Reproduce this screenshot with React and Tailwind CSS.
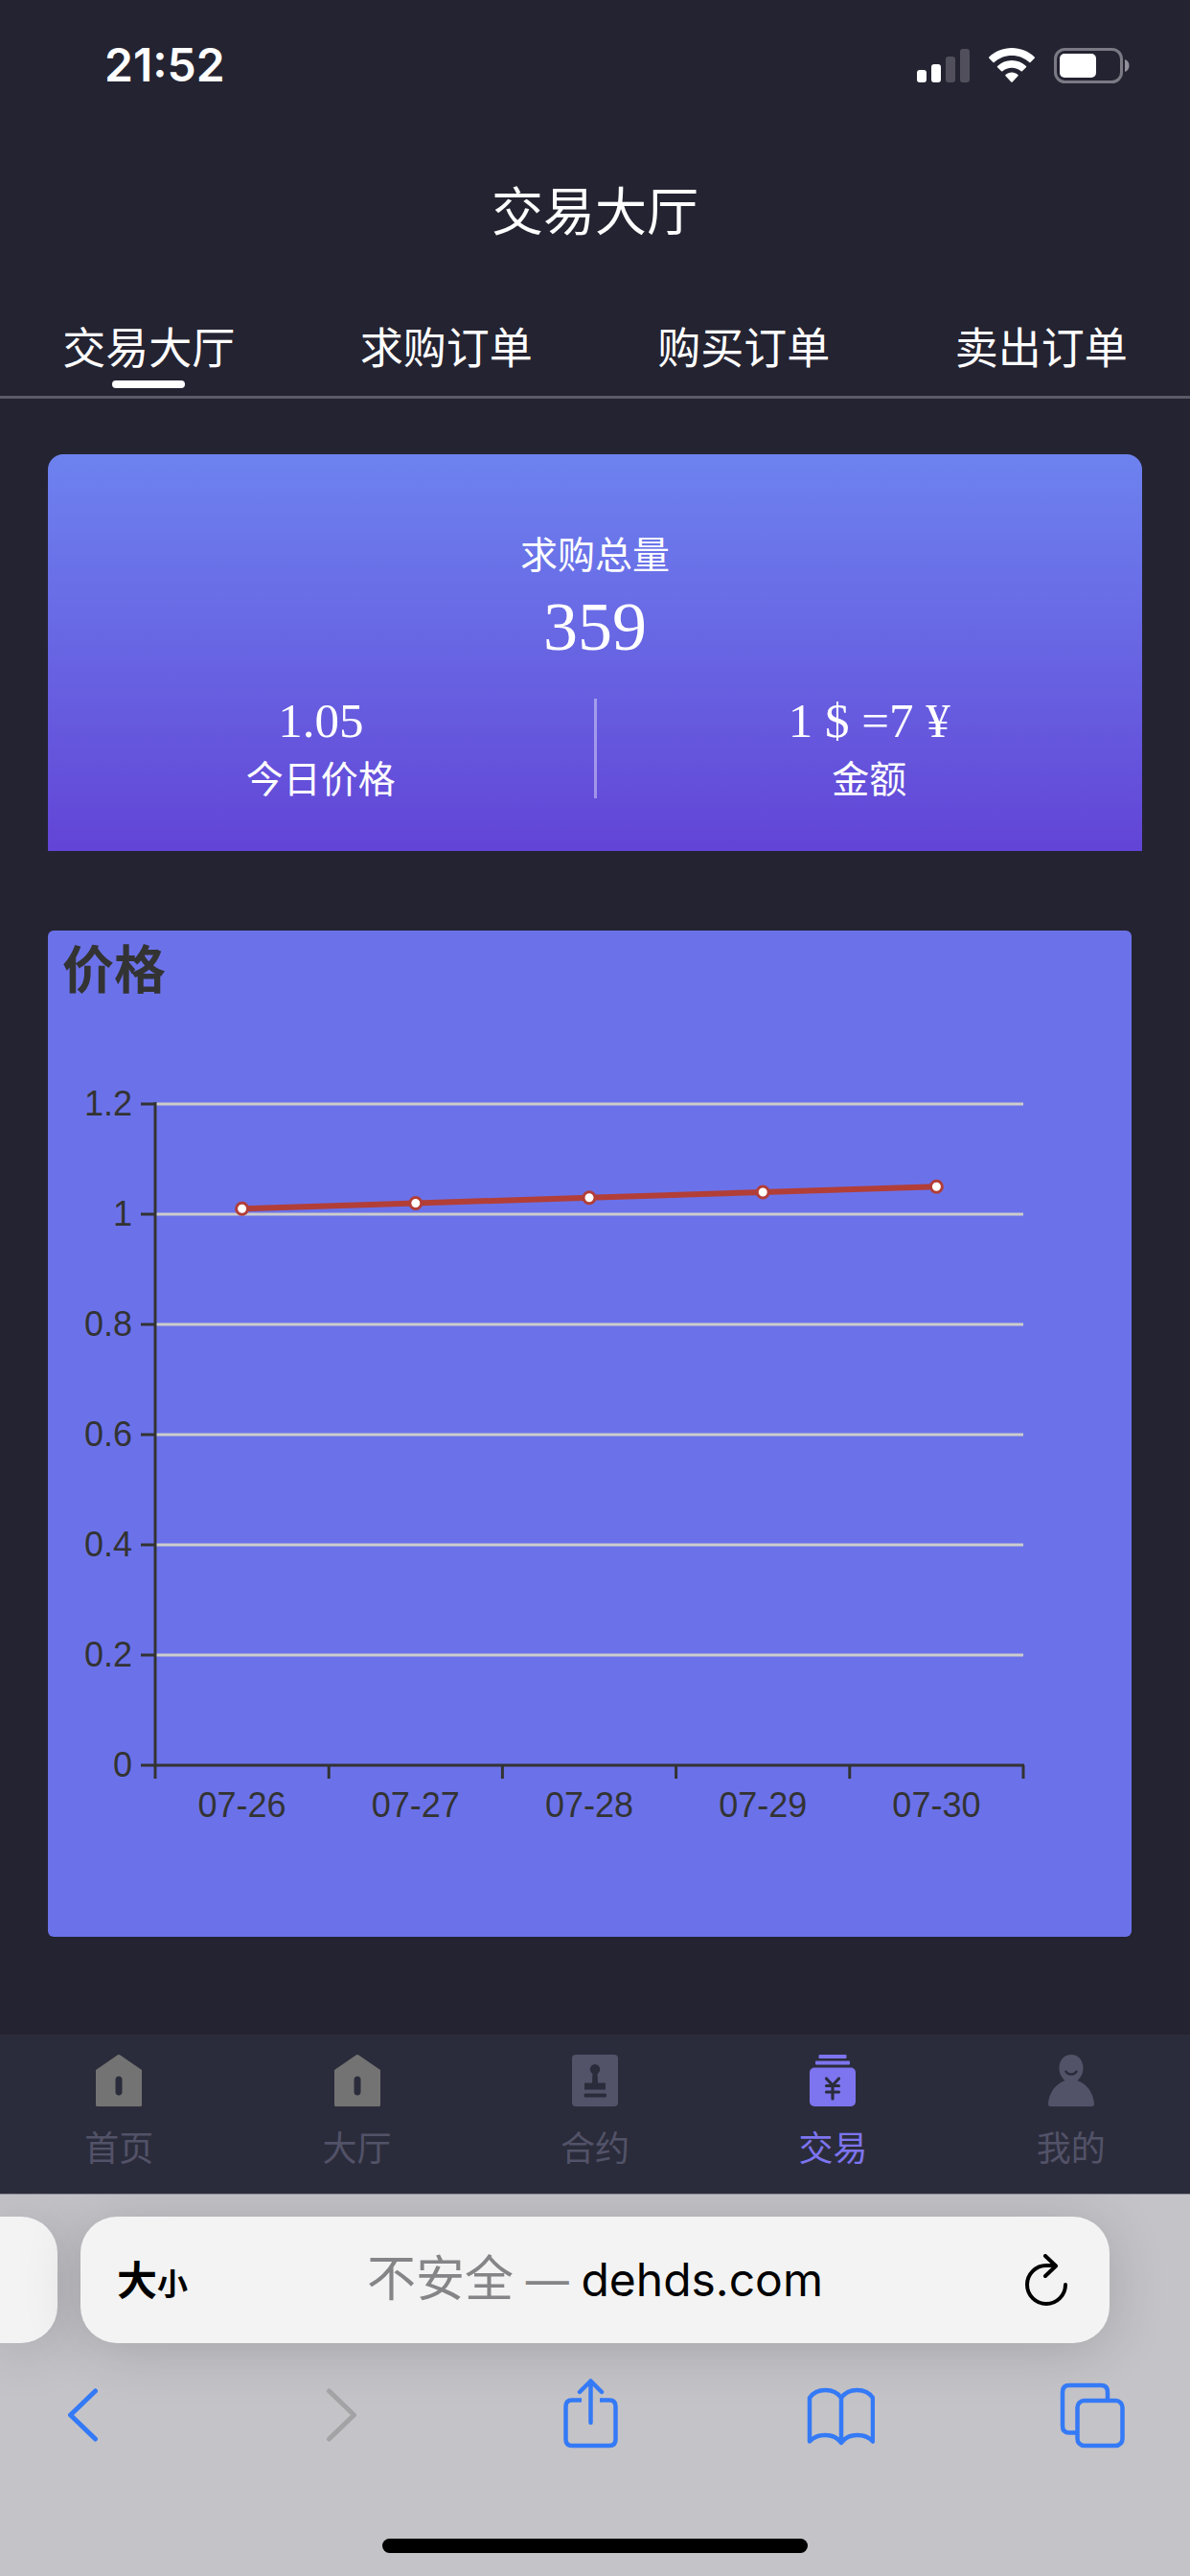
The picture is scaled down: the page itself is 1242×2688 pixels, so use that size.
import React, { useState } from "react";

const tabs = ["交易大厅", "求购订单", "购买订单", "卖出订单"];

const prices = [
  { date: "07-26", price: 1.01 },
  { date: "07-27", price: 1.02 },
  { date: "07-28", price: 1.03 },
  { date: "07-29", price: 1.04 },
  { date: "07-30", price: 1.05 },
];

const yTicks = [1.2, 1, 0.8, 0.6, 0.4, 0.2, 0];

const StatusBar = () => (
  <div className="flex h-[136px] items-center justify-between pl-[109px] pr-[63px]">
    <span className="font-['Inter'] text-[48px] font-semibold leading-[56px]">
      21:52
    </span>
    <div className="flex items-center gap-5">
      <svg width="55" height="37" viewBox="0 0 55 37" aria-hidden="true">
        <rect x="0" y="23" width="10" height="13" rx="3" fill="#fff" />
        <rect x="15" y="17" width="10" height="19" rx="3" fill="#fff" />
        <rect x="30" y="9" width="10" height="27" rx="3" fill="#504f5b" />
        <rect x="45" y="1" width="10" height="35" rx="3" fill="#504f5b" />
      </svg>
      <svg width="48" height="37" viewBox="0 0 48 37" fill="#fff" aria-hidden="true">
        <path d="M24 0C33 0 41.500 3.500 47.700 9.500C48.100 9.900 48.100 10.400 47.700 10.800L43.600 15C43.200 15.400 42.700 15.400 42.300 15C37.400 10.500 31 7.900 24 7.900C17 7.900 10.600 10.500 5.700 15C5.300 15.400 4.800 15.400 4.400 15L.3 10.800C-.1 10.400-.1 9.900.3 9.500C6.500 3.500 15 0 24 0Z" />
        <path d="M24 13C29.700 13 35 15.200 39 18.900C39.400 19.300 39.400 19.800 39 20.200L34.900 24.300C34.500 24.700 34 24.700 33.600 24.300C31 22 27.700 20.700 24 20.700C20.300 20.700 17 22 14.400 24.300C14 24.700 13.500 24.700 13.100 24.300L9 20.200C8.600 19.800 8.600 19.300 9 18.900C13 15.200 18.300 13 24 13Z" />
        <path d="M24 25.500C26.500 25.500 28.700 26.400 30.500 28C30.900 28.400 30.900 28.900 30.500 29.300L24.700 35.400C24.300 35.800 23.700 35.800 23.300 35.400L17.500 29.300C17.100 28.900 17.100 28.400 17.500 28C19.300 26.400 21.500 25.500 24 25.500Z" />
      </svg>
      <svg width="79" height="37" viewBox="0 0 79 37" aria-hidden="true">
        <rect x="1.500" y="1.500" width="69" height="34" rx="10" fill="none" stroke="#7b7a84" strokeWidth="3" />
        <rect x="6" y="6" width="38" height="25" rx="5" fill="#fff" />
        <path d="M74 12C77 13 78.500 15.500 78.500 18.500C78.500 21.500 77 24 74 25Z" fill="#918f99" />
      </svg>
    </div>
  </div>
);

const SummaryCard = () => (
  <section className="mx-[50px] mt-[58px] rounded-t-2xl bg-linear-to-b from-[#6d82ef] to-[#6244d6] pb-[52px] pt-[76px] text-center">
    <p className="text-[39px] leading-[52px]">求购总量</p>
    <p className="mt-1.5 font-['Liberation_Serif'] text-[72px] leading-[92px]">359</p>
    <div className="mt-[26px] flex items-center">
      <div className="flex-1">
        <p className="font-['Liberation_Serif'] text-[51px] leading-[52px]">1.05</p>
        <p className="mt-1.5 text-[39px] leading-[52px]">今日价格</p>
      </div>
      <div className="h-[104px] w-[3px] bg-white/40" />
      <div className="flex-1">
        <p className="font-['Liberation_Serif'] text-[51px] leading-[52px]">1 $ =7 ¥</p>
        <p className="mt-1.5 text-[39px] leading-[52px]">金额</p>
      </div>
    </div>
  </section>
);

const PriceChart = () => {
  // plot area inside the 1131 x 966 drawing
  const left = 112;
  const right = 1018;
  const top = 97;
  const bottom = 787;
  const step = (right - left) / prices.length;

  const toX = (i) => left + step * (i + 0.5);
  const toY = (value) => bottom - (value / 1.2) * (bottom - top);
  const line = prices.map((p, i) => `${toX(i)},${toY(p.price)}`).join(" ");

  return (
    <section className="ml-[50px] mr-[61px] mt-[83px] rounded-md bg-[#6b72e9] text-[#333]">
      <h2 className="px-[15px] pt-2 text-[54px] font-bold leading-[60px]">价格</h2>
      <svg
        viewBox="0 0 1131 966"
        className="mt-4 block w-full font-['Liberation_Sans'] text-[36px]"
        role="img"
        aria-label="价格"
      >
        {yTicks.map((tick) => (
          <g key={tick}>
            {tick > 0 && (
              <line x1={left} x2={right} y1={toY(tick)} y2={toY(tick)} stroke="#ccc" strokeWidth="3" />
            )}
            <line x1={left - 15} x2={left} y1={toY(tick)} y2={toY(tick)} stroke="#333" strokeWidth="3" />
            <text x={left - 24} y={toY(tick) + 12} textAnchor="end" fill="#333">
              {tick}
            </text>
          </g>
        ))}
        <line x1={left} x2={left} y1={top - 2} y2={bottom + 2} stroke="#333" strokeWidth="3" />
        <line x1={left} x2={right + 1} y1={bottom} y2={bottom} stroke="#333" strokeWidth="3" />
        {[...prices, null].map((_, i) => (
          <line
            key={i}
            x1={left + step * i}
            x2={left + step * i}
            y1={bottom}
            y2={bottom + 14}
            stroke="#333"
            strokeWidth="3"
          />
        ))}
        {prices.map((p, i) => (
          <text key={p.date} x={toX(i)} y={bottom + 54} textAnchor="middle" fill="#333">
            {p.date}
          </text>
        ))}
        <polyline points={line} fill="none" stroke="#b23e38" strokeWidth="6" />
        {prices.map((p, i) => (
          <circle
            key={p.date}
            cx={toX(i)}
            cy={toY(p.price)}
            r="6"
            fill="#fff"
            stroke="#b23e38"
            strokeWidth="3"
          />
        ))}
      </svg>
    </section>
  );
};

const HomeIcon = () => (
  <svg width="48" height="54" viewBox="0 0 48 54" aria-hidden="true">
    <path
      fill="#737373"
      fillRule="evenodd"
      d="M22.500.5C23.400-.2 24.600-.2 25.500.5L48 16V52.500Q48 54 46.500 54H1.500Q0 54 0 52.500V16ZM24 22.500C22 22.500 20.500 24 20.500 26V39C20.500 41 22 42.500 24 42.500C26 42.500 27.500 41 27.500 39V26C27.500 24 26 22.500 24 22.500Z"
    />
  </svg>
);

const ContractIcon = () => (
  <svg width="48" height="54" viewBox="0 0 48 54" aria-hidden="true">
    <rect width="48" height="54" rx="4" fill="#525368" />
    <g fill="#2b2c3b">
      <circle cx="24" cy="15.300" r="5.200" />
      <path d="M21.500 18H26.500L27 29.500H35V36.500H13V29.500H21Z" />
      <rect x="12.500" y="40.500" width="23.500" height="4" rx="1.500" />
    </g>
  </svg>
);

const TradeIcon = () => (
  <svg width="48" height="54" viewBox="0 0 48 54" fill="#7d74ef" aria-hidden="true">
    <rect x="9.500" y="0" width="29" height="4" rx="1" />
    <rect x="6" y="6.500" width="36" height="4" rx="1" />
    <rect x="0" y="13.500" width="48" height="40.500" rx="5" />
    <path
      d="M17.500 25L24 32L30.500 25M24 32V46M17.500 32.500H30.500M17.500 39H30.500"
      fill="none"
      stroke="#2b2c3b"
      strokeWidth="3.200"
      strokeLinecap="round"
    />
  </svg>
);

const MineIcon = () => (
  <svg width="48" height="54" viewBox="0 0 48 54" fill="#525368" aria-hidden="true">
    <path d="M24 0C31.500 0 36.500 6 36.500 14C36.500 19.500 34 24 30.500 27C40 30 47 39.500 48 51Q48 54 46 54H2Q0 54 0 51C1 39.500 8 30 17.500 27C14 24 11.500 19.500 11.500 14C11.500 6 16.500 0 24 0Z" />
    <path d="M18.500 17.500C20.500 21.500 27.500 21.500 29.500 17.500" fill="none" stroke="#2b2c3b" strokeWidth="2.500" strokeLinecap="round" />
  </svg>
);

const navItems = [
  { label: "首页", icon: <HomeIcon /> },
  { label: "大厅", icon: <HomeIcon /> },
  { label: "合约", icon: <ContractIcon /> },
  { label: "交易", icon: <TradeIcon />, active: true },
  { label: "我的", icon: <MineIcon /> },
];

const BottomNav = () => (
  <nav className="mt-[102px] grid grid-cols-5 bg-[#2b2c3b] pb-[21px] pt-[21px]">
    {navItems.map((item) => (
      <a
        key={item.label}
        href="#"
        className={`flex flex-col items-center gap-3.5 pb-0.5 text-[36px] leading-[54px] ${
          item.active ? "text-[#7d74ef]" : "text-[#525268]"
        }`}
      >
        {item.icon}
        {item.label}
      </a>
    ))}
  </nav>
);

const BrowserBar = () => (
  <footer className="overflow-hidden border-t border-[#8d8c98] bg-[#c4c3c8] pt-[23px] text-black">
    <div className="flex gap-6">
      <div className="h-[132px] w-[60px] rounded-r-[38px] bg-[#f3f3f3] shadow-[0_6px_60px_rgba(0,0,0,0.16)]" />
      <div className="mr-[84px] flex h-[132px] flex-1 items-center justify-between rounded-[38px] bg-[#f3f3f3] pl-[38px] pr-[44px] shadow-[0_6px_60px_rgba(0,0,0,0.16)]">
        <button type="button" className="flex w-[82px] items-baseline font-bold leading-[60px]">
          <span className="text-[42px]">大</span>
          <span className="text-[32px]">小</span>
        </button>
        <p className="font-['Inter','Noto_Sans_CJK_SC',sans-serif] text-[48px] leading-[60px]">
          <span className="text-[51px] text-[#858588]">不安全</span>
          <span className="text-[45px] text-[#858588]"> — </span>
          dehds.com
        </p>
        <button type="button" aria-label="刷新" className="flex w-[76px] justify-end">
          <svg width="44" height="54" viewBox="0 0 44 54" fill="none" stroke="#000" strokeWidth="4" strokeLinecap="round" strokeLinejoin="round">
            <path d="M42 32A20 20 0 1 1 22 12H31" />
            <path d="M21 2L32 12.500L21 23" />
          </svg>
        </button>
      </div>
    </div>

    <div className="flex justify-between pl-[51px] pr-[66px] pt-[37px]">
      <button type="button" aria-label="后退">
        <svg width="72" height="76" viewBox="0 0 72 76" fill="none" stroke="#347af6" strokeWidth="5" strokeLinecap="round" strokeLinejoin="round">
          <path d="M48.500 13L22.500 38L48.500 63" />
        </svg>
      </button>
      <button type="button" aria-label="前进">
        <svg width="72" height="76" viewBox="0 0 72 76" fill="none" stroke="#a3a3a5" strokeWidth="5" strokeLinecap="round" strokeLinejoin="round">
          <path d="M29.500 13L55.500 38L29.500 63" />
        </svg>
      </button>
      <button type="button" aria-label="分享">
        <svg width="72" height="76" viewBox="0 0 72 76" fill="none" stroke="#347af6" strokeWidth="4.500" strokeLinecap="round">
          <path d="M38.500 46V2.500M27 14L38.500 2.500L50 14" strokeLinejoin="round" />
          <path d="M29 22.500H19Q12.500 22.500 12.500 29V63.500Q12.500 70 19 70H58Q64.500 70 64.500 63.500V29Q64.500 22.500 58 22.500H48" strokeLinecap="butt" />
        </svg>
      </button>
      <button type="button" aria-label="书签">
        <svg width="72" height="76" viewBox="0 0 72 76" fill="none" stroke="#347af6" strokeWidth="4.500" strokeLinecap="round" strokeLinejoin="round">
          <path d="M37 20C33 14.500 27 12 20.500 12C13 12 7.500 15 4 20V65.500C8 61 13 59 20.500 59C27 59 33 61.500 37 67C41 61.500 47 59 53.500 59C61 59 66 61 70 65.500V20C66.500 15 61 12 53.500 12C47 12 41 14.500 37 20ZM37 20V67" />
        </svg>
      </button>
      <button type="button" aria-label="标签页">
        <svg width="72" height="76" viewBox="0 0 72 76" fill="none" stroke="#347af6" strokeWidth="4.500">
          <path d="M19 56.500H12Q5 56.500 5 49.500V14Q5 7 12 7H45Q52 7 52 14V23" />
          <rect x="20.500" y="23" width="47" height="47" rx="7" />
        </svg>
      </button>
    </div>

    <div className="mx-auto mb-6 mt-[91px] h-[15px] w-[444px] rounded-full bg-black" />
  </footer>
);

const App = () => {
  const [activeTab, setActiveTab] = useState(tabs[0]);

  return (
    <div className="bg-[#242331] font-['Noto_Sans_CJK_SC',sans-serif] text-white">
      <StatusBar />

      <h1 className="pt-[46px] text-center text-[54px] leading-[72px]">交易大厅</h1>

      {/* Tabs */}
      <div className="mt-[79px] grid grid-cols-4 border-b-[3px] border-[#5b5a66] pb-2">
        {tabs.map((tab) => (
          <button
            key={tab}
            type="button"
            onClick={() => setActiveTab(tab)}
            className="flex flex-col items-center gap-2 text-[45px] leading-[56px]"
          >
            {tab}
            <span
              className={`h-2 w-[76px] rounded-full ${activeTab === tab ? "bg-white" : ""}`}
            />
          </button>
        ))}
      </div>

      <SummaryCard />
      <PriceChart />
      <BottomNav />
      <BrowserBar />
    </div>
  );
};

export default App;
